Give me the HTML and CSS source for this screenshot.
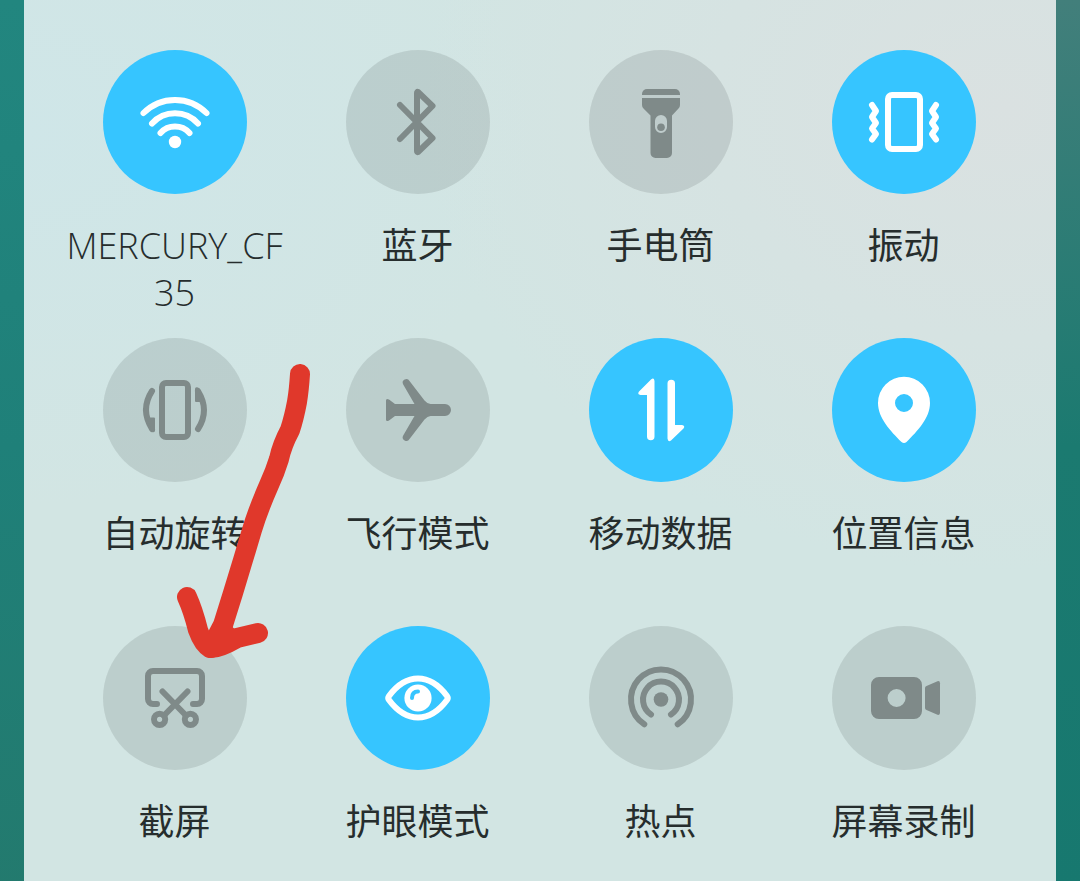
FILE: index.html
```html
<!DOCTYPE html>
<html lang="zh-CN">
<head>
  <meta charset="UTF-8">
  <meta name="viewport" content="width=device-width, initial-scale=1">
  <title>快捷开关</title>
  <link rel="stylesheet" href="styles.css">
</head>
<body>
  <main class="panel">
    <div class="toggles">
      <button type="button" class="toggle on" aria-pressed="true">
        <svg class="disc" viewBox="0 0 144 144" aria-hidden="true">
          <g class="line">
            <path d="M40.5 63a44.4 44.4 0 0 1 63 0"/>
            <path d="M49 73.5a31 31 0 0 1 46 0"/>
            <path d="M57.5 83a19.5 19.5 0 0 1 29 0"/>
          </g>
          <circle class="fill" cx="72" cy="92" r="6.2"/>
        </svg>
        <span class="label ssid">MERCURY_CF35</span>
      </button>

      <button type="button" class="toggle" aria-pressed="false">
        <svg class="disc" viewBox="0 0 144 144" aria-hidden="true">
          <path class="line" d="M54 55l32.500 33L72 102q-1 .5-1-1V43q0-1.500 1-1L86.500 56 54 89"/>
        </svg>
        <span class="label">蓝牙</span>
      </button>

      <button type="button" class="toggle" aria-pressed="false">
        <svg class="disc" viewBox="0 0 144 144" aria-hidden="true">
          <path class="fill" d="M53 45v-1a5 5 0 0 1 5-5h28a5 5 0 0 1 5 5v1z"/>
          <path class="fill" fill-rule="evenodd" d="M53 48h38v7q0 2-1.5 3.500L83 65.500V103a5 5 0 0 1-5 5H66.500a5 5 0 0 1-5-5V65.500L54.500 58.500Q53 57 53 55zM72 65a6 6 0 0 0-6 6v6a6 6 0 0 0 12 0v-6a6 6 0 0 0-6-6z"/>
          <circle class="fill" cx="72" cy="77.3" r="3.8"/>
        </svg>
        <span class="label">手电筒</span>
      </button>

      <button type="button" class="toggle on" aria-pressed="true">
        <svg class="disc" viewBox="0 0 144 144" aria-hidden="true">
          <g class="line">
            <rect x="56" y="45" width="32" height="54" rx="4"/>
            <path d="M40 55l4 6-4 6 4 6-4 5.500 4 5.500-4 5.500"/>
            <path d="M104 55l-4 6 4 6-4 6 4 5.500-4 5.500 4 5.500"/>
          </g>
        </svg>
        <span class="label">振动</span>
      </button>

      <button type="button" class="toggle" aria-pressed="false">
        <svg class="disc" viewBox="0 0 144 144" aria-hidden="true">
          <g class="line">
            <rect x="59" y="45" width="26" height="54" rx="4"/>
            <path d="M49 53q-12 18.500 0 38"/>
            <path d="M95 91q12-18.500 0-38"/>
          </g>
          <path class="fill" d="M44 79.500h7q1 0 1 1v12q0 2.500-3 1.500z"/>
          <path class="fill" d="M100 64h-7q-1 0-1-1V51q0-2.500 3-1.500z"/>
        </svg>
        <span class="label">自动旋转</span>
      </button>

      <button type="button" class="toggle" aria-pressed="false">
        <svg class="disc" viewBox="0 0 144 144" aria-hidden="true">
          <path class="fill" d="M49 66h19.500L57.200 46.500a3.500 3.500 0 0 1 6.300-3.500l15 19.500q3 3.500 6 3.500H99a6 6 0 0 1 0 12H84.500q-3 0-6 3.500L63.500 101a3.500 3.500 0 0 1-6.300-3.500L68.500 78H49l-6 4.500q-3 1.500-3-1v-19q0-2.500 3-1z"/>
        </svg>
        <span class="label">飞行模式</span>
      </button>

      <button type="button" class="toggle on" aria-pressed="true">
        <svg class="disc" viewBox="0 0 144 144" aria-hidden="true">
          <path class="fill" d="M65.500 43v55.500a3.700 3.700 0 0 1-7.500 0V57h-6.500q-3.500-.5-1.500-3.500l12-12q3-2.500 3.500 1.500z"/>
          <path class="fill" d="M78.500 100.500V45.500a3.700 3.700 0 0 1 7.500 0V87h7q3.500.5 1.500 3.500L82 102.500q-3 2-3.500-2z"/>
        </svg>
        <span class="label">移动数据</span>
      </button>

      <button type="button" class="toggle on" aria-pressed="true">
        <svg class="disc" viewBox="0 0 144 144" aria-hidden="true">
          <path class="fill" fill-rule="evenodd" d="M72 38.800A26 26 0 0 0 46 65c0 15 12.500 28 23.500 39q2.500 2.200 5 0C85.500 93 98 80 98 65a26 26 0 0 0-26-26.200zM72 56a9 9 0 1 1 0 18 9 9 0 0 1 0-18z"/>
        </svg>
        <span class="label">位置信息</span>
      </button>

      <button type="button" class="toggle" aria-pressed="false">
        <svg class="disc" viewBox="0 0 144 144" aria-hidden="true">
          <g class="line">
            <path d="M54 78h-4a5 5 0 0 1-5-5V50a5 5 0 0 1 5-5h44a5 5 0 0 1 5 5v23a5 5 0 0 1-5 5h-4"/>
            <path d="M59.500 65.500l23.500 24M84.500 65.500L61 89.500"/>
            <circle cx="56.600" cy="93.300" r="5.600"/>
            <circle cx="87.400" cy="93.300" r="5.600"/>
          </g>
        </svg>
        <span class="label">截屏</span>
      </button>

      <button type="button" class="toggle on" aria-pressed="true">
        <svg class="disc" viewBox="0 0 144 144" aria-hidden="true">
          <path class="line" d="M43 70Q56 52.500 72 52.500T101 70q1.500 2 0 4Q88 91.500 72 91.500T43 74q-1.500-2 0-4z"/>
          <circle class="fill" cx="72" cy="72" r="13.600"/>
          <path class="shine" d="M66 72q0-6.500 6-6.500"/>
        </svg>
        <span class="label">护眼模式</span>
      </button>

      <button type="button" class="toggle" aria-pressed="false">
        <svg class="disc" viewBox="0 0 144 144" aria-hidden="true">
          <circle class="fill" cx="72" cy="73.500" r="7.300"/>
          <g class="line">
            <path d="M62 88.500a18 18 0 1 1 20 0"/>
            <path d="M55.300 98.300a30 30 0 1 1 33.400 0"/>
          </g>
        </svg>
        <span class="label">热点</span>
      </button>

      <button type="button" class="toggle" aria-pressed="false">
        <svg class="disc" viewBox="0 0 144 144" aria-hidden="true">
          <path class="fill" fill-rule="evenodd" d="M47 51h35a8 8 0 0 1 8 8v26a8 8 0 0 1-8 8H47a8 8 0 0 1-8-8V59a8 8 0 0 1 8-8zM64.600 63a9 9 0 1 0 0 18 9 9 0 0 0 0-18z"/>
          <path class="fill" d="M94.500 60l11-4.800q2.500-.7 2.500 2v29.600q0 2.700-2.500 2l-11-4.800q-1.500-.7-1.500-2V62q0-1.300 1.500-2z"/>
        </svg>
        <span class="label">屏幕录制</span>
      </button>
    </div>

    <!-- hand-drawn arrow pointing at the screenshot toggle -->
    <svg class="arrow" viewBox="0 0 120 310" aria-hidden="true">
      <path d="M130 24Q129 40 127 52 124 68 120 80 112 95 109 109 105 122 99 135 88 160 82 180L73 210 63 243 53 275 41 298"/>
      <path d="M17 247Q23 260 28 280 33 294 40 298 48 299 67 288L88 283"/>
      <path class="arrow-head" d="M32 290L55 270 72 286 45 304z"/>
    </svg>
  </main>
</body>
</html>
```

FILE: styles.css
```css
* {
  box-sizing: border-box;
}
body {
  margin: 0;
  padding: 0 24px;
  min-height: 100vh;
  background:
    linear-gradient(to bottom, #22867f, #1f8079 50%, #237a6e) left / 24px 100% no-repeat,
    linear-gradient(to bottom, #427f7b, #1b7a70 50%, #17786f) right / 24px 100% no-repeat,
    #1f7e76;
  font-family: "Open Sans", "Noto Sans CJK SC", sans-serif;
}
.panel {
  position: relative;
  min-height: 100vh;
  padding: 50px 31px 0 29px;
  background:
    radial-gradient(ellipse at 95% 12%, #dae1e1, rgba(218, 225, 225, 0) 42%),
    radial-gradient(ellipse at 0 15%, #cfe6e8, rgba(207, 230, 232, 0) 35%),
    #d2e5e3;
}
.toggles {
  display: grid;
  grid-template-columns: repeat(4, 1fr);
  grid-auto-rows: minmax(266px, auto);
  row-gap: 22px;
}
.toggle {
  display: flex;
  flex-direction: column;
  align-items: center;
  gap: 28px;
  min-width: 0;
  padding: 0 8px;
  border: none;
  background: none;
  color: #7f8a89;
  font: inherit;
  cursor: pointer;
}
.disc {
  flex: none;
  width: 144px;
  height: 144px;
  border-radius: 50%;
  background: rgba(0, 10, 10, 0.1);
}
.on .disc {
  background: #36c5ff;
  color: #fff;
}
.fill {
  fill: currentColor;
}
.line {
  fill: none;
  stroke: currentColor;
  stroke-width: 6;
  stroke-linecap: round;
  stroke-linejoin: round;
}
.shine {
  fill: none;
  stroke: #36c5ff;
  stroke-width: 4;
  stroke-linecap: round;
}
.label {
  max-width: 100%;
  color: #262d2d;
  font-size: 36px;
  font-weight: 400;
  line-height: 47px;
  text-align: center;
  word-break: break-all;
}
.ssid {
  font-weight: 300;
}

/* Arrow */
.arrow {
  position: absolute;
  top: 350px;
  left: 146px;
  width: 120px;
  height: 310px;
  overflow: visible;
  pointer-events: none;
}
.arrow path {
  fill: none;
  stroke: #e0382b;
  stroke-width: 20;
  stroke-linecap: round;
  stroke-linejoin: round;
}
.arrow .arrow-head {
  fill: #e0382b;
  stroke: none;
}
```
